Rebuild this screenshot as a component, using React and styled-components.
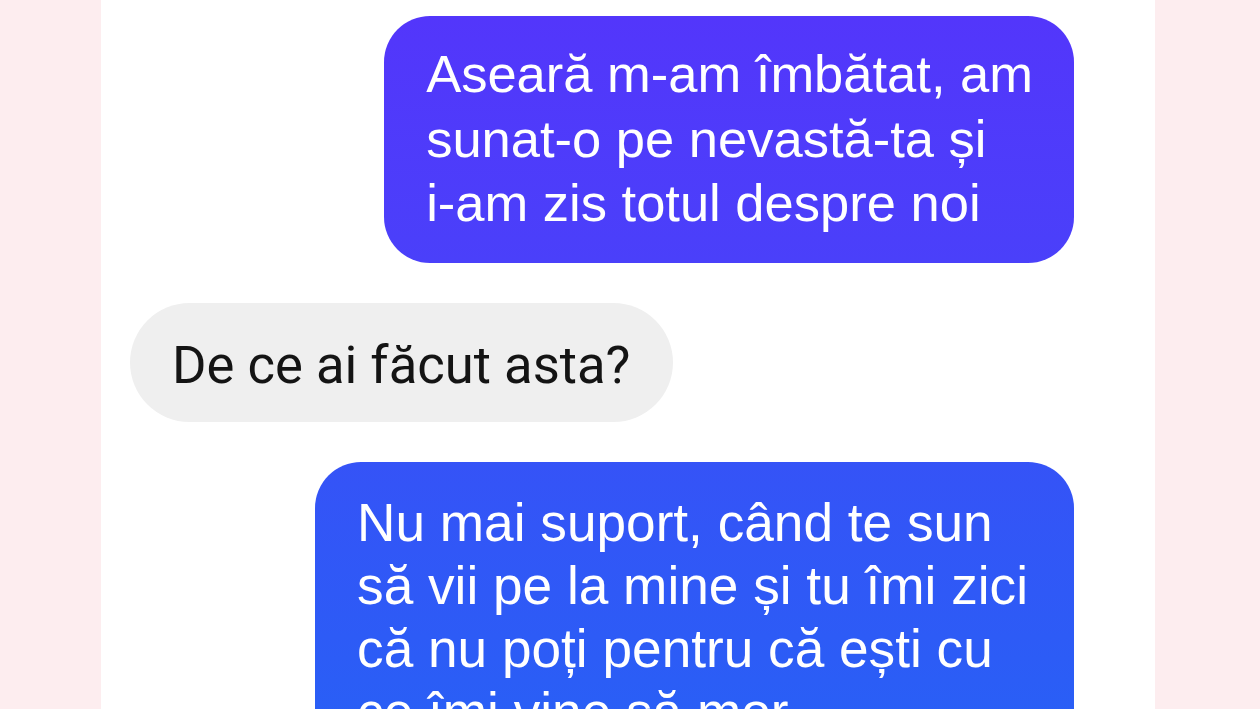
import React from "react";
import styled, { createGlobalStyle } from "styled-components";

const Global = createGlobalStyle`
  html, body {
    margin: 0;
    padding: 0;
    height: 709px;
    overflow: hidden;
    background: #fdedef;
  }
`;

const Page = styled.div`
  display: flex;
  height: 709px;
  padding-left: 101px;
  background: #fdedef;
`;

const Panel = styled.div`
  width: 1054px;
  background: #ffffff;
  display: flex;
  flex-direction: column;
  gap: 40px;
  padding: 16px 81px 0 29px;
  box-sizing: border-box;
  overflow: hidden;
`;

const Row = styled.div`
  display: flex;
  justify-content: ${(p) => (p.$mine ? "flex-end" : "flex-start")};
`;

const Bubble = styled.div`
  font-family: "Liberation Sans", Arial, sans-serif;
  font-size: ${(p) => p.$size}px;
  line-height: ${(p) => p.$lh}px;
  color: #ffffff;
  padding: ${(p) => p.$pt}px ${(p) => p.$pr}px 27px 42px;
  border-radius: 46px;
  background: ${(p) => p.$bg};
`;

const Theirs = styled.div`
  font-family: Roboto, "Liberation Sans", sans-serif;
  font-size: 52.6px;
  line-height: 64px;
  color: #141414;
  background: #efefef;
  border-radius: 60px;
  padding: 30px 43px 25px 42px;
`;

const Line = styled.span`
  display: block;
  white-space: nowrap;
`;

const messages = [
  {
    mine: true,
    size: 52.5,
    lh: 64.5,
    pt: 26,
    pr: 41,
    bg: "linear-gradient(180deg, #5336fb 0%, #4a40fa 100%)",
    lines: ["Aseară m-am îmbătat, am", "sunat-o pe nevastă-ta și", "i-am zis totul despre noi"],
  },
  { mine: false, lines: ["De ce ai făcut asta?"] },
  {
    mine: true,
    size: 53.2,
    lh: 63,
    pt: 29,
    pr: 46,
    bg: "linear-gradient(180deg, #3553f7 0%, #2464f5 100%)",
    lines: [
      "Nu mai suport, când te sun",
      "să vii pe la mine și tu îmi zici",
      "că nu poți pentru că ești cu",
      "ce îmi vine să mor",
      "soția mea",
    ],
  },
];

export default function App() {
  return (
    <Page>
      <Global />
      <Panel>
        {messages.map((m, i) => (
          <Row key={i} $mine={m.mine}>
            {m.mine ? (
              <Bubble $bg={m.bg} $size={m.size} $lh={m.lh} $pt={m.pt} $pr={m.pr}>
                {m.lines.map((l, j) => (
                  <Line key={j}>{l}</Line>
                ))}
              </Bubble>
            ) : (
              <Theirs>
                {m.lines.map((l, j) => (
                  <Line key={j}>{l}</Line>
                ))}
              </Theirs>
            )}
          </Row>
        ))}
      </Panel>
    </Page>
  );
}
